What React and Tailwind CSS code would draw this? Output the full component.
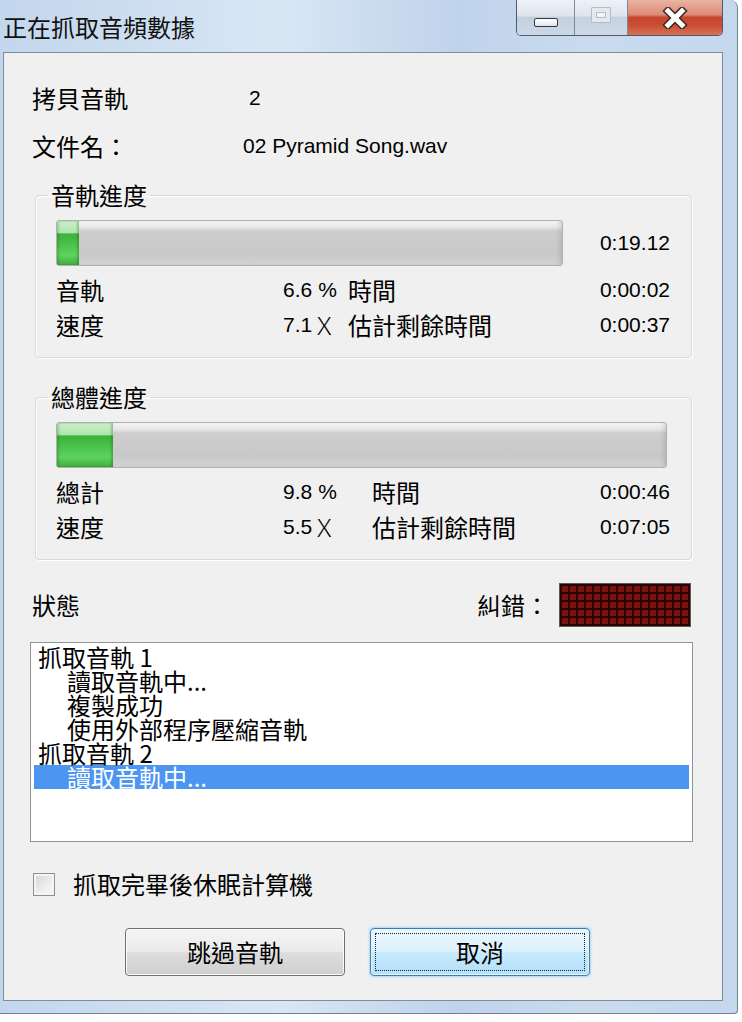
import React from "react";

const latin = "font-['Liberation_Sans',sans-serif] text-[21px]";

function ProgressBar({ trackW, fillW }) {
  return (
    <div
      className={`flex h-[46px] overflow-hidden rounded-[3px] border border-[#b0b0b0] bg-[linear-gradient(180deg,#f5f5f5_0%,#e4e4e4_16%,#cecece_22%,#c8c8c8_75%,#d2d2d2_100%)] shadow-[inset_-5px_0_5px_-3px_rgba(0,0,0,0.12),inset_5px_0_5px_-3px_rgba(0,0,0,0.08)] ${trackW}`}
    >
      <div
        className={`h-full ${fillW} bg-[linear-gradient(180deg,#cdf0cd_0%,#afe5af_26%,#3db13d_30%,#4cc44c_55%,#5dd25d_78%,#41ae41_100%)] shadow-[inset_-2px_0_2px_rgba(0,80,0,0.25),inset_2px_0_2px_rgba(0,80,0,0.2)]`}
      />
    </div>
  );
}

function StatRow({ label, valueW, value, unit, unitCjk, label2, time, mt }) {
  return (
    <div className={`flex h-[24px] items-center leading-[24px] ${mt}`}>
      <div className="w-[227px] shrink-0 text-[24px]">{label}</div>
      <div className={`flex shrink-0 items-center ${valueW}`}>
        <span className={latin}>{value}</span>
        {unitCjk ? (
          <span className="text-[24px] font-light">{unit}</span>
        ) : (
          <span className={`${latin} ml-[6px]`}>{unit}</span>
        )}
      </div>
      <div className="text-[24px]">{label2}</div>
      <div className={`${latin} ml-auto`}>{time}</div>
    </div>
  );
}

function Group({ legend, mt, trackW, fillW, showTime, rows }) {
  return (
    <fieldset
      className={`ml-[31px] w-[657px] rounded-[4px] border border-[#d3d9df] pb-[20px] shadow-[inset_1px_1px_0_#ffffff,1px_1px_0_#ffffff] ${mt}`}
    >
      <legend className="ml-[12px] px-[3px] text-[24px] leading-[24px]">{legend}</legend>
      <div className="pl-[20px] pr-[21px]">
        <div className="mt-[13px] flex items-center">
          <ProgressBar trackW={trackW} fillW={fillW} />
          {showTime ? <span className={`${latin} ml-auto`}>0:19.12</span> : null}
        </div>
        {rows}
      </div>
    </fieldset>
  );
}

function LedGrid() {
  const cells = Array.from({ length: 80 });
  return (
    <div className="grid grid-cols-[repeat(16,6px)] grid-rows-[repeat(5,6px)] gap-[2px] border border-[#5a5a5a] bg-[#2a0202] p-[2px]">
      {cells.map((_, i) => (
        <div key={i} className="bg-[#7a1212]" />
      ))}
    </div>
  );
}

export default function App() {
  return (
    <div className="h-[1022px] w-[742px] overflow-hidden bg-white font-['Noto_Sans_CJK_TC',sans-serif] text-black">
      <div className="flex h-[1014px] w-[738px] flex-col rounded-tr-[8px] rounded-br-[4px] border-r border-b border-[#6f8194] bg-[linear-gradient(90deg,#c2d6ed_0%,#d9e6f4_38%,#bfd3eb_62%,#cadbee_80%,#c4d7ed_100%)]">
        {/* Title bar */}
        <div className="flex h-[52px] shrink-0 items-start">
          <div className="pl-[3px] pt-[14px] text-[24px] leading-[26px] text-[#111]">正在抓取音頻數據</div>
          <div className="ml-auto mr-[14px] flex h-[36px] overflow-hidden rounded-b-[5px] border-x border-b border-[#4c5c70]">
            <div className="flex w-[58px] justify-center border-r border-[#7d8a9b] bg-[linear-gradient(180deg,#eef2f7_0%,#dde5ee_45%,#c4d0de_50%,#cdd8e5_100%)]">
              <div className="mt-[18px] h-[9px] w-[24px] rounded-[2px] border border-[#2f3a48] bg-[linear-gradient(180deg,#ffffff_0%,#dfe4ea_100%)]" />
            </div>
            <div className="flex w-[53px] justify-center border-r border-[#7d8a9b] bg-[linear-gradient(180deg,#eef2f7_0%,#dde5ee_45%,#c6d2df_50%,#cfd9e6_100%)]">
              <div className="mt-[7px] flex h-[16px] w-[20px] items-center justify-center rounded-[1px] border border-[#b3bdc9] bg-[#e4e9ef]">
                <div className="h-[6px] w-[10px] border border-[#b3bdc9] bg-[#f2f4f7]" />
              </div>
            </div>
            <div className="flex w-[94px] justify-center bg-[linear-gradient(180deg,#eab4a4_0%,#dc8b74_42%,#c6452b_50%,#c84d31_70%,#d77054_100%)]">
              <svg width="26" height="22" viewBox="0 0 26 22" className="mt-[7px]">
                <path d="M6 4 L20 18 M20 4 L6 18" stroke="#3b2a28" strokeWidth="8" strokeLinecap="square" fill="none" />
                <path d="M6 4 L20 18 M20 4 L6 18" stroke="#ffffff" strokeWidth="5" strokeLinecap="square" fill="none" />
              </svg>
            </div>
          </div>
        </div>

        {/* Client area */}
        <div className="ml-[3px] flex h-[949px] w-[720px] shrink-0 flex-col border border-[#7f8c99] bg-[#f0f0f0]">
          <div className="ml-[28px] mt-[33px] flex h-[24px] items-center text-[24px] leading-[24px]">
            <div className="w-[211px]">拷貝音軌</div>
            <div className={`${latin} pl-[6px]`}>2</div>
          </div>
          <div className="ml-[28px] mt-[24px] flex h-[24px] items-center text-[24px] leading-[24px]">
            <div className="w-[211px]">文件名：</div>
            <div className={latin}>02 Pyramid Song.wav</div>
          </div>

          <Group
            legend="音軌進度"
            mt="mt-[25px]"
            trackW="w-[507px]"
            fillW="w-[22px]"
            showTime
            rows={
              <>
                <StatRow mt="mt-[12px]" label="音軌" valueW="w-[65px]" value="6.6" unit="%" label2="時間" time="0:00:02" />
                <StatRow mt="mt-[11px]" label="速度" valueW="w-[65px]" value="7.1" unit="Ｘ" unitCjk label2="估計剩餘時間" time="0:00:37" />
              </>
            }
          />

          <Group
            legend="總體進度"
            mt="mt-[27px]"
            trackW="w-[611px]"
            fillW="w-[56px]"
            rows={
              <>
                <StatRow mt="mt-[12px]" label="總計" valueW="w-[89px]" value="9.8" unit="%" label2="時間" time="0:00:46" />
                <StatRow mt="mt-[11px]" label="速度" valueW="w-[89px]" value="5.5" unit="Ｘ" unitCjk label2="估計剩餘時間" time="0:07:05" />
              </>
            }
          />

          {/* Status row */}
          <div className="mt-[23px] flex items-center text-[24px] leading-[24px]">
            <div className="ml-[28px]">狀態</div>
            <div className="ml-auto mr-[10px]">糾錯：</div>
            <div className="mr-[31px]">
              <LedGrid />
            </div>
          </div>

          {/* Log list */}
          <div className="ml-[26px] mt-[15px] h-[200px] w-[663px] border border-[#8e949b] bg-white pt-[2px] text-[24px] leading-[24px]">
            <div className="mx-[3px] pl-[4px]">抓取音軌 1</div>
            <div className="mx-[3px] pl-[33px]">讀取音軌中...</div>
            <div className="mx-[3px] pl-[33px]">複製成功</div>
            <div className="mx-[3px] pl-[33px]">使用外部程序壓縮音軌</div>
            <div className="mx-[3px] pl-[4px]">抓取音軌 2</div>
            <div className="mx-[3px] bg-[#4c96f2] pl-[33px] text-white">讀取音軌中...</div>
          </div>

          {/* Checkbox */}
          <div className="mt-[30px] flex h-[24px] items-center">
            <div className="ml-[29px] h-[23px] w-[22px] border border-[#8e8f8f] bg-[linear-gradient(135deg,#d4d4d4_0%,#ececec_55%,#fafafa_100%)] shadow-[inset_0_0_0_2px_#f4f4f4]" />
            <div className="ml-[18px] text-[24px] leading-[24px]">抓取完畢後休眠計算機</div>
          </div>

          {/* Buttons */}
          <div className="mt-[32px] flex">
            <button className="ml-[121px] h-[48px] w-[220px] rounded-[4px] border border-[#707070] bg-[linear-gradient(180deg,#f4f4f4_0%,#ebebeb_48%,#dddddd_52%,#cfcfcf_100%)] text-[24px] leading-[24px] shadow-[inset_0_0_0_1px_#fcfcfc]">
              跳過音軌
            </button>
            <button className="ml-[25px] flex h-[48px] w-[220px] items-center justify-center rounded-[4px] border border-[#3c7fb1] bg-[linear-gradient(180deg,#ecf7fd_0%,#dcf1fc_48%,#c6e9fd_52%,#b3dff8_100%)] p-[4px] shadow-[0_0_3px_#6cbaf0,inset_0_0_0_1px_#e6f5fd]">
              <span className="flex h-full w-full items-center justify-center border border-dotted border-[#222] text-[24px] leading-[24px]">
                取消
              </span>
            </button>
          </div>
        </div>
      </div>
    </div>
  );
}
